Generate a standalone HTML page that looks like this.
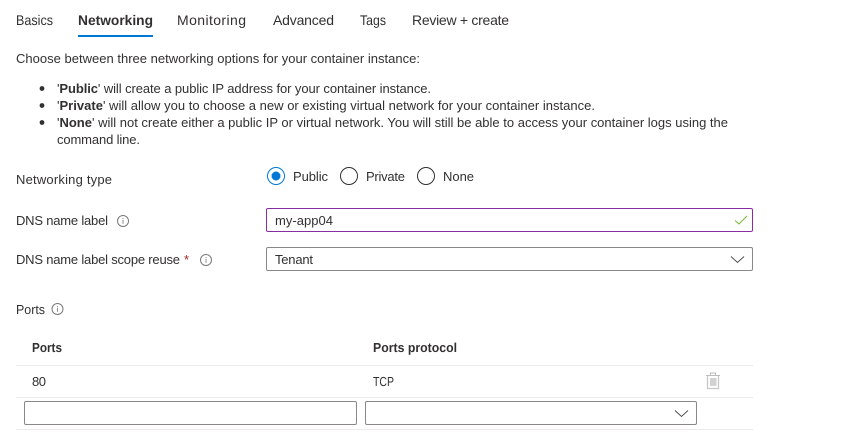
<!DOCTYPE html>
<html lang="en">
<head>
<meta charset="utf-8">
<title>Networking</title>
<style>
html,body{margin:0;padding:0;background:#fff;width:846px;height:441px;overflow:hidden}
svg{display:block;position:absolute;left:0;top:0}
text{font-family:"Liberation Sans",Arial,sans-serif;font-size:13px;fill:#323130}
.b{font-weight:bold}
.t{font-size:14px}
.g{text-rendering:geometricPrecision}
</style>
</head>
<body>
<svg width="846" height="441" viewBox="0 0 846 441" xmlns="http://www.w3.org/2000/svg">
<rect width="846" height="441" fill="#fff"/>
<!-- tabs -->
<text x="16" y="25" textLength="37" lengthAdjust="spacingAndGlyphs" class="t g">Basics</text>
<text x="78" y="25" textLength="75" lengthAdjust="spacingAndGlyphs" class="t b g">Networking</text>
<text x="177" y="25" textLength="69" class="t">Monitoring</text>
<text x="273" y="25" textLength="61" class="t">Advanced</text>
<text x="360" y="25" textLength="26" lengthAdjust="spacingAndGlyphs" class="t g">Tags</text>
<text x="412" y="25" textLength="97" class="t">Review + create</text>
<rect x="78" y="35" width="75" height="2" fill="#0078d4"/>
<!-- intro -->
<text x="16" y="63" textLength="404">Choose between three networking options for your container instance:</text>
<circle cx="42" cy="88.5" r="2.4" fill="#323130"/>
<circle cx="42" cy="105.5" r="2.4" fill="#323130"/>
<circle cx="42" cy="122.5" r="2.4" fill="#323130"/>
<text x="57" y="93" textLength="374">'<tspan class="b">Public</tspan>' will create a public IP address for your container instance.</text>
<text x="57" y="110" textLength="538">'<tspan class="b">Private</tspan>' will allow you to choose a new or existing virtual network for your container instance.</text>
<text x="57" y="127" textLength="671">'<tspan class="b">None</tspan>' will not create either a public IP or virtual network. You will still be able to access your container logs using the</text>
<text x="57" y="144" textLength="83">command line.</text>
<!-- labels -->
<text x="16" y="184" textLength="96">Networking type</text>
<text x="16" y="225" textLength="92">DNS name label</text>
<text x="16" y="264" textLength="164">DNS name label scope reuse</text>
<text x="184" y="264" style="fill:#a4262c">*</text>
<text x="16" y="314" textLength="29" lengthAdjust="spacingAndGlyphs" class="g">Ports</text>
<!-- info icons -->
<g fill="none" stroke="#7a7a7a" stroke-width="1">
<circle cx="123" cy="221" r="5.5"/>
<circle cx="206" cy="260" r="5.5"/>
<circle cx="57.5" cy="309" r="5.5"/>
</g>
<g fill="#8f8f8f">
<rect x="122.5" y="219.8" width="1" height="4"/><rect x="122.5" y="218" width="1" height="1"/>
<rect x="205.5" y="258.8" width="1" height="4"/><rect x="205.5" y="257" width="1" height="1"/>
<rect x="57" y="307.8" width="1" height="4"/><rect x="57" y="306" width="1" height="1"/>
</g>
<!-- radios -->
<circle cx="276" cy="176" r="8.5" fill="#fff" stroke="#0078d4" stroke-width="1"/>
<circle cx="276" cy="176" r="4.5" fill="#0078d4"/>
<text x="293" y="181" textLength="35">Public</text>
<circle cx="349" cy="176" r="8.5" fill="#fff" stroke="#323130" stroke-width="1"/>
<text x="366" y="181" textLength="39">Private</text>
<circle cx="426" cy="176" r="8.5" fill="#fff" stroke="#323130" stroke-width="1"/>
<text x="443" y="181" textLength="31">None</text>
<!-- DNS input -->
<rect x="266.5" y="208.5" width="486" height="23" rx="1.5" fill="#fff" stroke="#8a2da5" stroke-width="1"/>
<text x="275" y="225" textLength="58">my-app04</text>
<path d="M735 220.5l4 3.5 8-8" fill="none" stroke="#7fba3c" stroke-width="1.1"/>
<!-- scope select -->
<rect x="266.5" y="247.5" width="486" height="23" rx="1.5" fill="#fff" stroke="#8a8886" stroke-width="1"/>
<text x="275" y="264" textLength="38">Tenant</text>
<path d="M731 256.5l6.5 6 6.5-6" fill="none" stroke="#505050" stroke-width="1"/>
<!-- table -->
<text x="32" y="352" textLength="30" lengthAdjust="spacingAndGlyphs" class="b g">Ports</text>
<text x="373" y="352" textLength="84" lengthAdjust="spacingAndGlyphs" class="b g">Ports protocol</text>
<rect x="16" y="365" width="737" height="1" fill="#edebe9"/>
<text x="32" y="386" textLength="14">80</text>
<text x="373" y="386" textLength="21" lengthAdjust="spacingAndGlyphs" class="g">TCP</text>
<rect x="16" y="397" width="737" height="1" fill="#edebe9"/>
<rect x="24.5" y="401.5" width="332" height="23" rx="1.5" fill="#fff" stroke="#8a8886" stroke-width="1"/>
<rect x="365.5" y="401.5" width="331" height="23" rx="1.5" fill="#fff" stroke="#8a8886" stroke-width="1"/>
<path d="M675 410.5l6.5 6 6.5-6" fill="none" stroke="#505050" stroke-width="1"/>
<rect x="16" y="429" width="737" height="1" fill="#edebe9"/>
<!-- trash -->
<g fill="none" stroke="#bdbdbd" stroke-width="1">
<path d="M706 375.5h14"/>
<path d="M710.5 375v-2h5v2"/>
</g>
<path d="M707.5 376v12.500h11V376" fill="none" stroke="#c8c8c8" stroke-width="1.3"/>
<rect x="710" y="378" width="6.5" height="8" fill="#d2d2d2"/>
</svg>
</body>
</html>
